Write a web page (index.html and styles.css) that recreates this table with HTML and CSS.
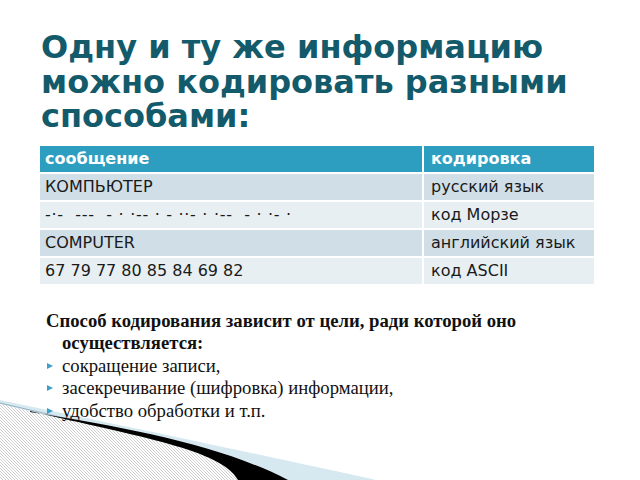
FILE: index.html
```html
<!DOCTYPE html>
<html lang="ru">
<head>
<meta charset="utf-8">
<title>Кодирование информации</title>
<link rel="stylesheet" href="styles.css">
</head>
<body>
<svg class="deco" width="400" height="82" viewBox="0 398 400 82" aria-hidden="true">
  <defs>
    <pattern id="hatch" patternUnits="userSpaceOnUse" width="3" height="3">
      <rect width="3" height="3" fill="#ffffff"/>
      <path d="M-1,-1 L4,4 M-1,2 L1,4 M2,-1 L4,1" stroke="#c2c2c2" stroke-width="0.8"/>
    </pattern>
  </defs>
  <path d="M0,400 C120,425 262,455 376,480 L0,480 Z" fill="#d6e8f0"/>
  <path d="M0,404 C140,437 222,450 238,480 L0,480 Z" fill="url(#hatch)"/>
  <path d="M0,403 C30,410 60,417 90,424" fill="none" stroke="#92b2c2" stroke-width="1"/>
  <path d="M30,412 C130,428 220,445 288,480 L238,480 C222,450 140,437 30,411 Z" fill="#000000"/>
</svg>
<div class="slide">
  <h1 class="title">Одну и ту же информацию<br>можно кодировать разными<br>способами:</h1>
  <table class="codes">
    <thead>
      <tr><th class="c1">сообщение</th><th class="c2">кодировка</th></tr>
    </thead>
    <tbody>
      <tr class="odd"><td class="c1">КОМПЬЮТЕР</td><td class="c2">русский язык</td></tr>
      <tr class="even"><td class="c1 morse">-·-  ---  - · ·-- · - ··- · ·--  - · ·- ·</td><td class="c2">код Морзе</td></tr>
      <tr class="odd"><td class="c1">COMPUTER</td><td class="c2">английский язык</td></tr>
      <tr class="even"><td class="c1">67 79 77 80 85 84 69 82</td><td class="c2">код ASCII</td></tr>
    </tbody>
  </table>
  <div class="text">
    <p class="lead">Способ кодирования зависит от цели, ради которой оно<br>осуществляется:</p>
    <ul class="bullets">
      <li>сокращение записи,</li>
      <li>засекречивание (шифровка) информации,</li>
      <li>удобство обработки и т.п.</li>
    </ul>
  </div>
</div>
</body>
</html>
```

FILE: styles.css
```css
html, body {
  margin: 0;
  padding: 0;
  background: #ffffff;
}

.slide {
  position: relative;
  z-index: 1;
  width: 640px;
  height: 480px;
  overflow: hidden;
  font-family: "DejaVu Sans", "Liberation Sans", sans-serif;
}

.title {
  margin: 0;
  padding: 30px 0 0 41px;
  font-family: "DejaVu Sans", sans-serif;
  font-weight: bold;
  font-size: 32px;
  line-height: 34.5px;
  color: #135a6b;
}

.codes {
  margin: 12px 0 0 40px;
  width: 554px;
  border-collapse: separate;
  border-spacing: 0;
  font-size: 16px;
  table-layout: fixed;
}

.codes th,
.codes td {
  height: 26px;
  padding: 0 0 0 5px;
  border-bottom: 2px solid #ffffff;
  text-align: left;
  vertical-align: middle;
  white-space: pre;
  color: #1a1a1a;
}

.codes .c1 {
  width: 377px;
  border-right: 2px solid #ffffff;
}

.codes .c2 {
  padding-left: 7px;
}

.codes .morse {
  letter-spacing: 0.7px;
}

.codes th {
  background: #2e9ec0;
  color: #ffffff;
  font-weight: bold;
}

.codes .odd td {
  background: #cfdee7;
}

.codes .even td {
  background: #e8eff3;
}

.text {
  margin: 24px 0 0 46px;
  font-family: "Liberation Serif", serif;
  font-size: 18.7px;
  line-height: 22.5px;
  color: #111111;
}

.lead {
  margin: 0;
  font-weight: bold;
  padding-left: 16px;
  text-indent: -16px;
}

.bullets {
  margin: 0;
  padding: 0 0 0 16px;
  list-style: none;
}

.bullets li {
  position: relative;
}

.bullets li::before {
  content: "";
  position: absolute;
  left: -15px;
  top: 8px;
  border-left: 6px solid #3d9fcb;
  border-top: 3.5px solid transparent;
  border-bottom: 3.5px solid transparent;
}

.deco {
  position: absolute;
  left: 0;
  top: 398px;
  z-index: 0;
  display: block;
}
```
